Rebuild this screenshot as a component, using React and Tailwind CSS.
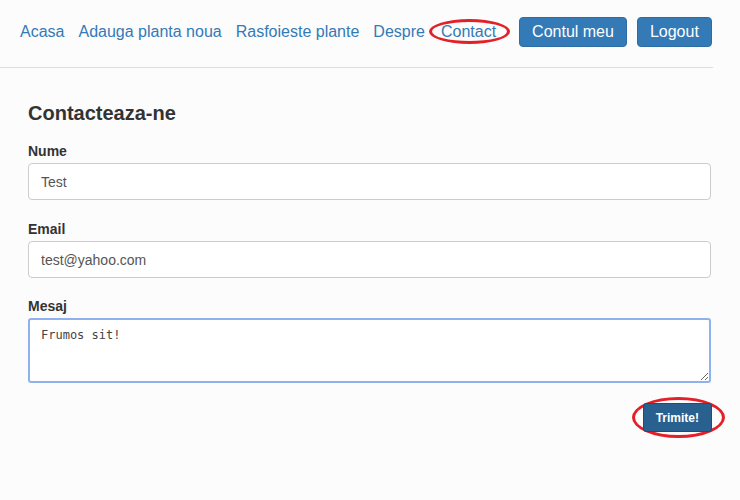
const navLinks = ['Acasa', 'Adauga planta noua', 'Rasfoieste plante', 'Despre'];

const App = () => {
  return (
    <div className="w-[740px] h-[500px] bg-[#fcfcfc] font-['Liberation_Sans',Arial,sans-serif] text-[#333] overflow-hidden">
      {/* Navbar */}
      <div className="w-[713px] h-[68px] border-b border-[#dedede] flex items-center pl-5 pb-[4px] whitespace-nowrap">
        <div className="flex items-center gap-[14px] text-[16px] leading-[20px] text-[#337ab7] shrink-0">
          {navLinks.map((l) => (
            <a key={l} href="#" className="hover:underline">{l}</a>
          ))}
          <span className="relative block ml-[2px]">
            <a href="#" className="relative z-10">Contact</a>
            <span className="absolute left-[-12px] top-[-3px] w-[81px] h-[25px] rounded-[50%] border-[3px] border-[#e3202a]" />
          </span>
        </div>
        <div className="flex items-center gap-[10px] ml-[23px] shrink-0">
          <button className="h-[30px] px-[12px] rounded-[4px] bg-[#337ab7] border border-[#2e6da4] text-white text-[16px]">
            Contul meu
          </button>
          <button className="h-[30px] px-[12px] rounded-[4px] bg-[#337ab7] border border-[#2e6da4] text-white text-[16px]">
            Logout
          </button>
        </div>
      </div>

      {/* Contact form */}
      <div className="pl-[28px] pr-[29px] pt-[33px]">
        <h2 className="text-[20px] font-bold leading-[24px] mb-[17px]">Contacteaza-ne</h2>
        <form className="flex flex-col">
          <label className="block text-[14px] font-bold leading-[18px] mb-[3px]">Nume</label>
          <input
            defaultValue="Test"
            className="h-[37px] px-[12px] border border-[#ccc] rounded-[4px] bg-white text-[14px] text-[#555] outline-none mb-[20px]"
          />
          <label className="block text-[14px] font-bold leading-[18px] mb-[3px]">Email</label>
          <input
            defaultValue="test@yahoo.com"
            className="h-[37px] px-[12px] border border-[#ccc] rounded-[4px] bg-white text-[14px] text-[#555] outline-none mb-[19px]"
          />
          <label className="block text-[14px] font-bold leading-[18px] mb-[3px]">Mesaj</label>
          <textarea
            defaultValue="Frumos sit!"
            className="h-[65px] px-[11px] pt-[6px] border-2 border-[#8fb2ef] rounded-[3px] bg-white text-[12px] text-[#444] font-['DejaVu_Sans_Mono',monospace] outline-none"
          />
          <div className="flex justify-end mt-[20px]">
            <span className="relative mr-[-1px]">
              <button
                type="button"
                className="relative z-10 h-[29px] px-[12px] rounded-[3px] bg-[#286090] border border-[#204d74] text-white text-[12px] font-bold"
              >
                Trimite!
              </button>
              <span className="absolute left-[-11px] top-[-6px] w-[93px] h-[41px] rounded-[50%] border-[3px] border-[#e3202a]" />
            </span>
          </div>
        </form>
      </div>
    </div>
  );
};

export default App;
